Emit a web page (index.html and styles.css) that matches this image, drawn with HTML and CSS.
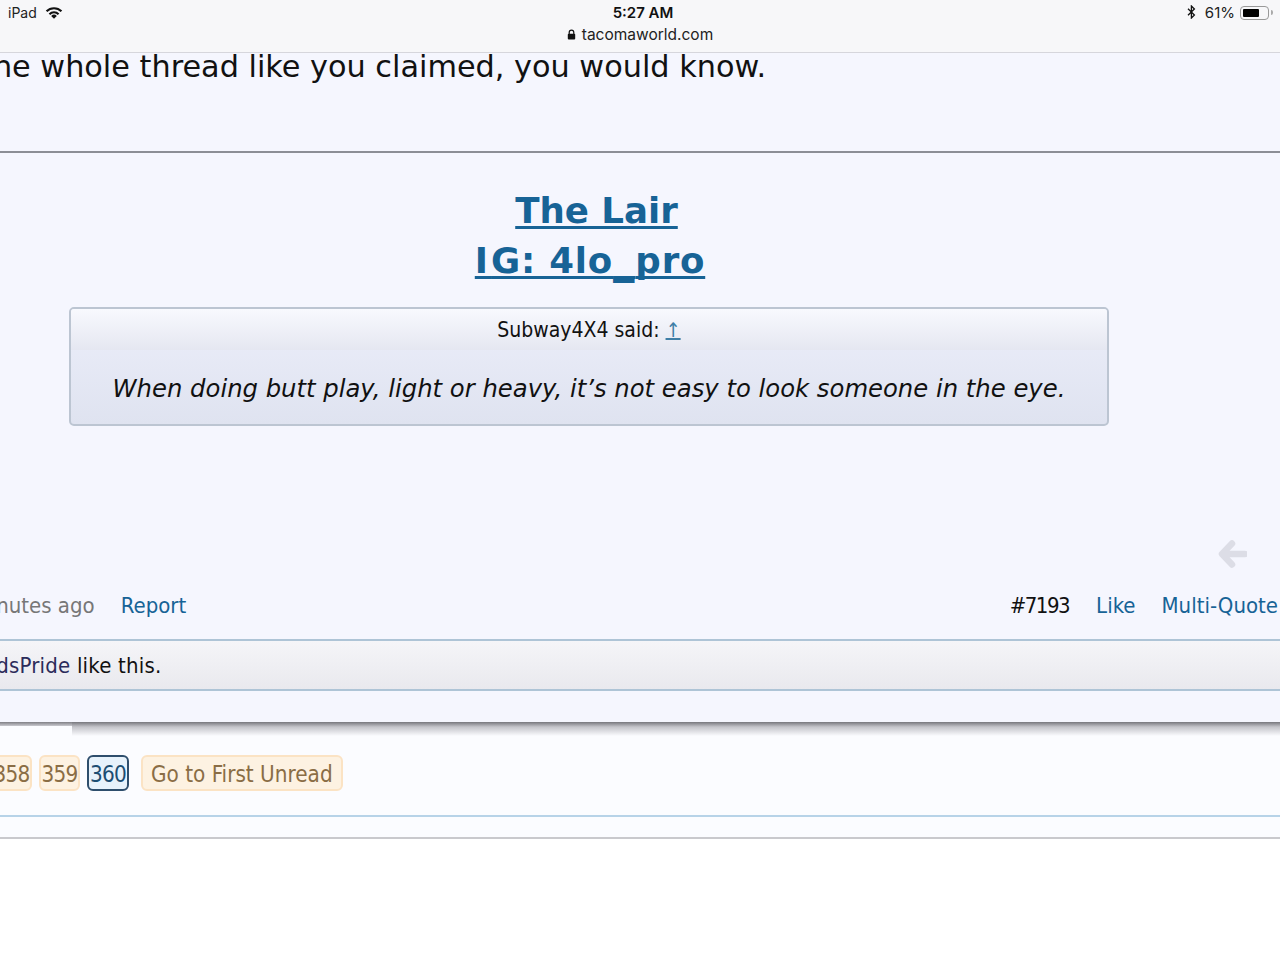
FILE: index.html
```html
<!DOCTYPE html>
<html lang="en">
<head>
<meta charset="utf-8">
<title>tacomaworld.com</title>
<link rel="stylesheet" href="styles.css">
</head>
<body>
<header class="statusbar">
  <div class="status-left">
    <span>iPad</span>
    <svg class="wifi" viewBox="0 0 18 13" width="18" height="13"><path d="M9 12.8 6.2 9.900a4 4 0 0 1 5.600 0z" fill="#111"/><path d="M3.700 7.400a7.500 7.500 0 0 1 10.600 0l-1.500 1.500a5.400 5.400 0 0 0-7.600 0z" fill="#111"/><path d="M.8 4.600a11.600 11.600 0 0 1 16.400 0l-1.500 1.500a9.500 9.500 0 0 0-13.400 0z" fill="#111"/></svg>
  </div>
  <div class="status-center">
    <div class="time">5:27 AM</div>
    <div class="url">
      <svg viewBox="0 0 9 11" width="9" height="11"><path d="M2.200 5V3.400a2.300 2.300 0 0 1 4.600 0V5" fill="none" stroke="#111" stroke-width="1.200"/><rect x="0.800" y="4.800" width="7.400" height="5.700" rx="1" fill="#111"/></svg>
      <span>tacomaworld.com</span>
    </div>
  </div>
  <div class="status-right">
    <svg viewBox="0 0 9 14" width="9" height="14"><path d="M1 3.800 7.400 10 4.400 13V1l3 3L1 10.200" fill="none" stroke="#111" stroke-width="1.300"/></svg>
    <span>61%</span>
    <span class="battery"><span class="battery-fill"></span></span>
    <span class="battery-tip"></span>
  </div>
</header>

<main class="post">
  <p class="post-text">the whole thread like you claimed, you would know.</p>
  <div class="signature">
    <a class="sig-link sig-first" href="#">The Lair</a>
    <a class="sig-link sig-second" href="#"><span class="wide-i">I</span>G: 4lo<span class="wide-u">_</span>pro</a>
    <div class="quote">
      <div class="quote-head">Subway4X4 said: <a class="quote-up" href="#">↑</a></div>
      <div class="quote-body">When doing butt play, light or heavy, it’s not easy to look someone in the eye.</div>
    </div>
  </div>
  <div class="back-row">
    <svg viewBox="0 0 30 30" width="30" height="30"><path d="M15 4.500 5 15l10 10.500M6 15h22" fill="none" stroke="#dcdde6" stroke-width="6.500" stroke-linecap="round" stroke-linejoin="round"/></svg>
  </div>
  <div class="meta">
    <div class="meta-left"><span class="ago">37 minutes ago</span><a href="#">Report</a></div>
    <div class="meta-right"><span class="num">#7193</span><a href="#">Like</a><a href="#">Multi-Quote</a></div>
  </div>
  <div class="likes"><div class="likes-text"><a href="#">BrandsPride</a> like this.</div></div>
</main>

<div class="shadow">
  <div class="shadow-left"></div>
  <div class="shadow-right"></div>
</div>

<nav class="pager">
  <a class="page num-page" href="#">358</a>
  <a class="page num-page" href="#">359</a>
  <a class="page num-page current" href="#">360</a>
  <a class="page unread" href="#">Go to First Unread</a>
</nav>
<div class="gap-band"></div>
</body>
</html>
```

FILE: styles.css
```css
* { box-sizing: border-box; }
html, body { margin: 0; padding: 0; background: #fff; }
body { width: 1280px; height: 960px; overflow: hidden; font-family: "DejaVu Sans Condensed", "DejaVu Sans", sans-serif; color: #111; }
a { color: #176396; text-decoration: none; }

.statusbar { height: 53px; background: #f7f7f9; border-bottom: 1px solid #d6d6dc; display: grid; grid-template-columns: 1fr auto 1fr; padding: 0 8px; font-family: Inter, "Liberation Sans", sans-serif; font-size: 14px; color: #222; }
.status-left { display: flex; align-items: flex-start; gap: 8px; padding-top: 4px; line-height: 17px; }
.wifi { margin-top: 2px; }
.status-center { text-align: center; }
.time { font-size: 15px; font-weight: 600; line-height: 17px; padding-top: 4px; padding-left: 6px; color: #111; }
.url { display: flex; align-items: center; justify-content: center; gap: 6px; font-size: 15.500px; line-height: 20px; margin-top: 3.500px; color: #222; }
.status-right { display: flex; justify-content: flex-end; align-items: flex-start; gap: 5px; padding-top: 4px; line-height: 17px; margin-right: -1px; font-size: 15px; }
.status-right svg { margin-right: 4px; margin-top: 1px; }
.battery { width: 29px; height: 14px; border: 1px solid #999; border-radius: 4px; padding: 2px; margin-top: 2px; margin-right: -3px; display: block; }
.battery-fill { display: block; width: 16px; height: 8px; background: #000; border-radius: 1px; }
.battery-tip { width: 2px; height: 5px; background: #aaa; margin-top: 6px; border-radius: 0 2px 2px 0; }

.post { background: #f5f6fe; height: 669px; overflow: hidden; }
.post-text { margin: 0; height: 100px; border-bottom: 2px solid #8c8e96; text-indent: -19px; font-family: "DejaVu Sans", sans-serif; font-size: 30.300px; line-height: 28px; white-space: nowrap; color: #111; }
.signature { display: flex; flex-direction: column; align-items: center; padding-left: 69px; padding-right: 171px; padding-top: 33px; }
.sig-link { font-family: "DejaVu Sans", sans-serif; font-weight: 700; font-size: 35.600px; line-height: 50px; text-decoration: underline; text-decoration-thickness: 2.500px; text-underline-offset: 3px; text-decoration-skip-ink: none; }
.sig-first { margin-left: 15px; }
.sig-second { margin-left: 2px; letter-spacing: 0.800px; }
.wide-i { letter-spacing: 3px; }
.wide-u { font-size: 43px; line-height: 0; }
.quote { align-self: stretch; height: 119px; margin-top: 21px; border: 2px solid #bcc5d2; border-radius: 5px; background: linear-gradient(#eceefa, #dfe3f0); }
.quote-head { height: 41px; background: linear-gradient(#f8f9fe, #e5e7f1); border-radius: 3px 3px 0 0; text-align: center; font-size: 21px; line-height: 43px; color: #111; }
.quote-up { text-decoration: underline; font-size: 20px; color: #3f7ea6; }
.quote-body { text-align: center; font-family: "DejaVu Sans", sans-serif; font-style: italic; font-size: 24.300px; line-height: 78px; color: #111; }
.back-row { display: flex; justify-content: flex-end; padding: 113px 33px 0 0; height: 157px; }
.meta { display: flex; justify-content: space-between; height: 56px; padding-top: 9px; font-size: 22px; line-height: 28px; white-space: nowrap; }
.meta-left { margin-left: -60px; display: flex; gap: 26px; }
.ago { color: #777; }
.meta-right { display: flex; gap: 26px; padding-right: 2px; }
.num { color: #111; letter-spacing: -1.500px; margin-right: 1px; }
.likes { height: 52px; border-top: 2px solid #aec4d6; border-bottom: 2px solid #aec4d6; background: linear-gradient(#f5f5f8, #e9e9ee); font-size: 22px; line-height: 49px; white-space: nowrap; }
.likes-text { margin-left: -51px; letter-spacing: 0.200px; }
.likes a { color: #2b2b5a; }

.shadow { display: flex; height: 14px; background: #fbfcff; }
.shadow-left { width: 72px; height: 4px; background: linear-gradient(#7f7f85, #c9c9cf); }
.shadow-right { flex: 1; background: linear-gradient(#77777d, #c4c4ca 35%, #fbfcff); }

.pager { height: 81px; background: #fbfcff; border-bottom: 2px solid #b7d3e8; display: flex; align-items: flex-start; gap: 7px; padding: 19px 0 0 0; margin-left: -9px; font-size: 22.300px; white-space: nowrap; }
.page { height: 36px; line-height: 34px; border: 2px solid #fbe3c4; border-radius: 6px; background: #fdf2e2; color: #8a6d45; }
.num-page { width: 41px; text-align: center; letter-spacing: -0.800px; }
.current { width: 42px; border-color: #2e4e6c; background: #e7f2fb; color: #1c4d72; }
.unread { padding: 0 8px; margin-left: 5px; }
.gap-band { height: 22px; background: #fbfcff; border-bottom: 2px solid #c9c9cd; }
```
